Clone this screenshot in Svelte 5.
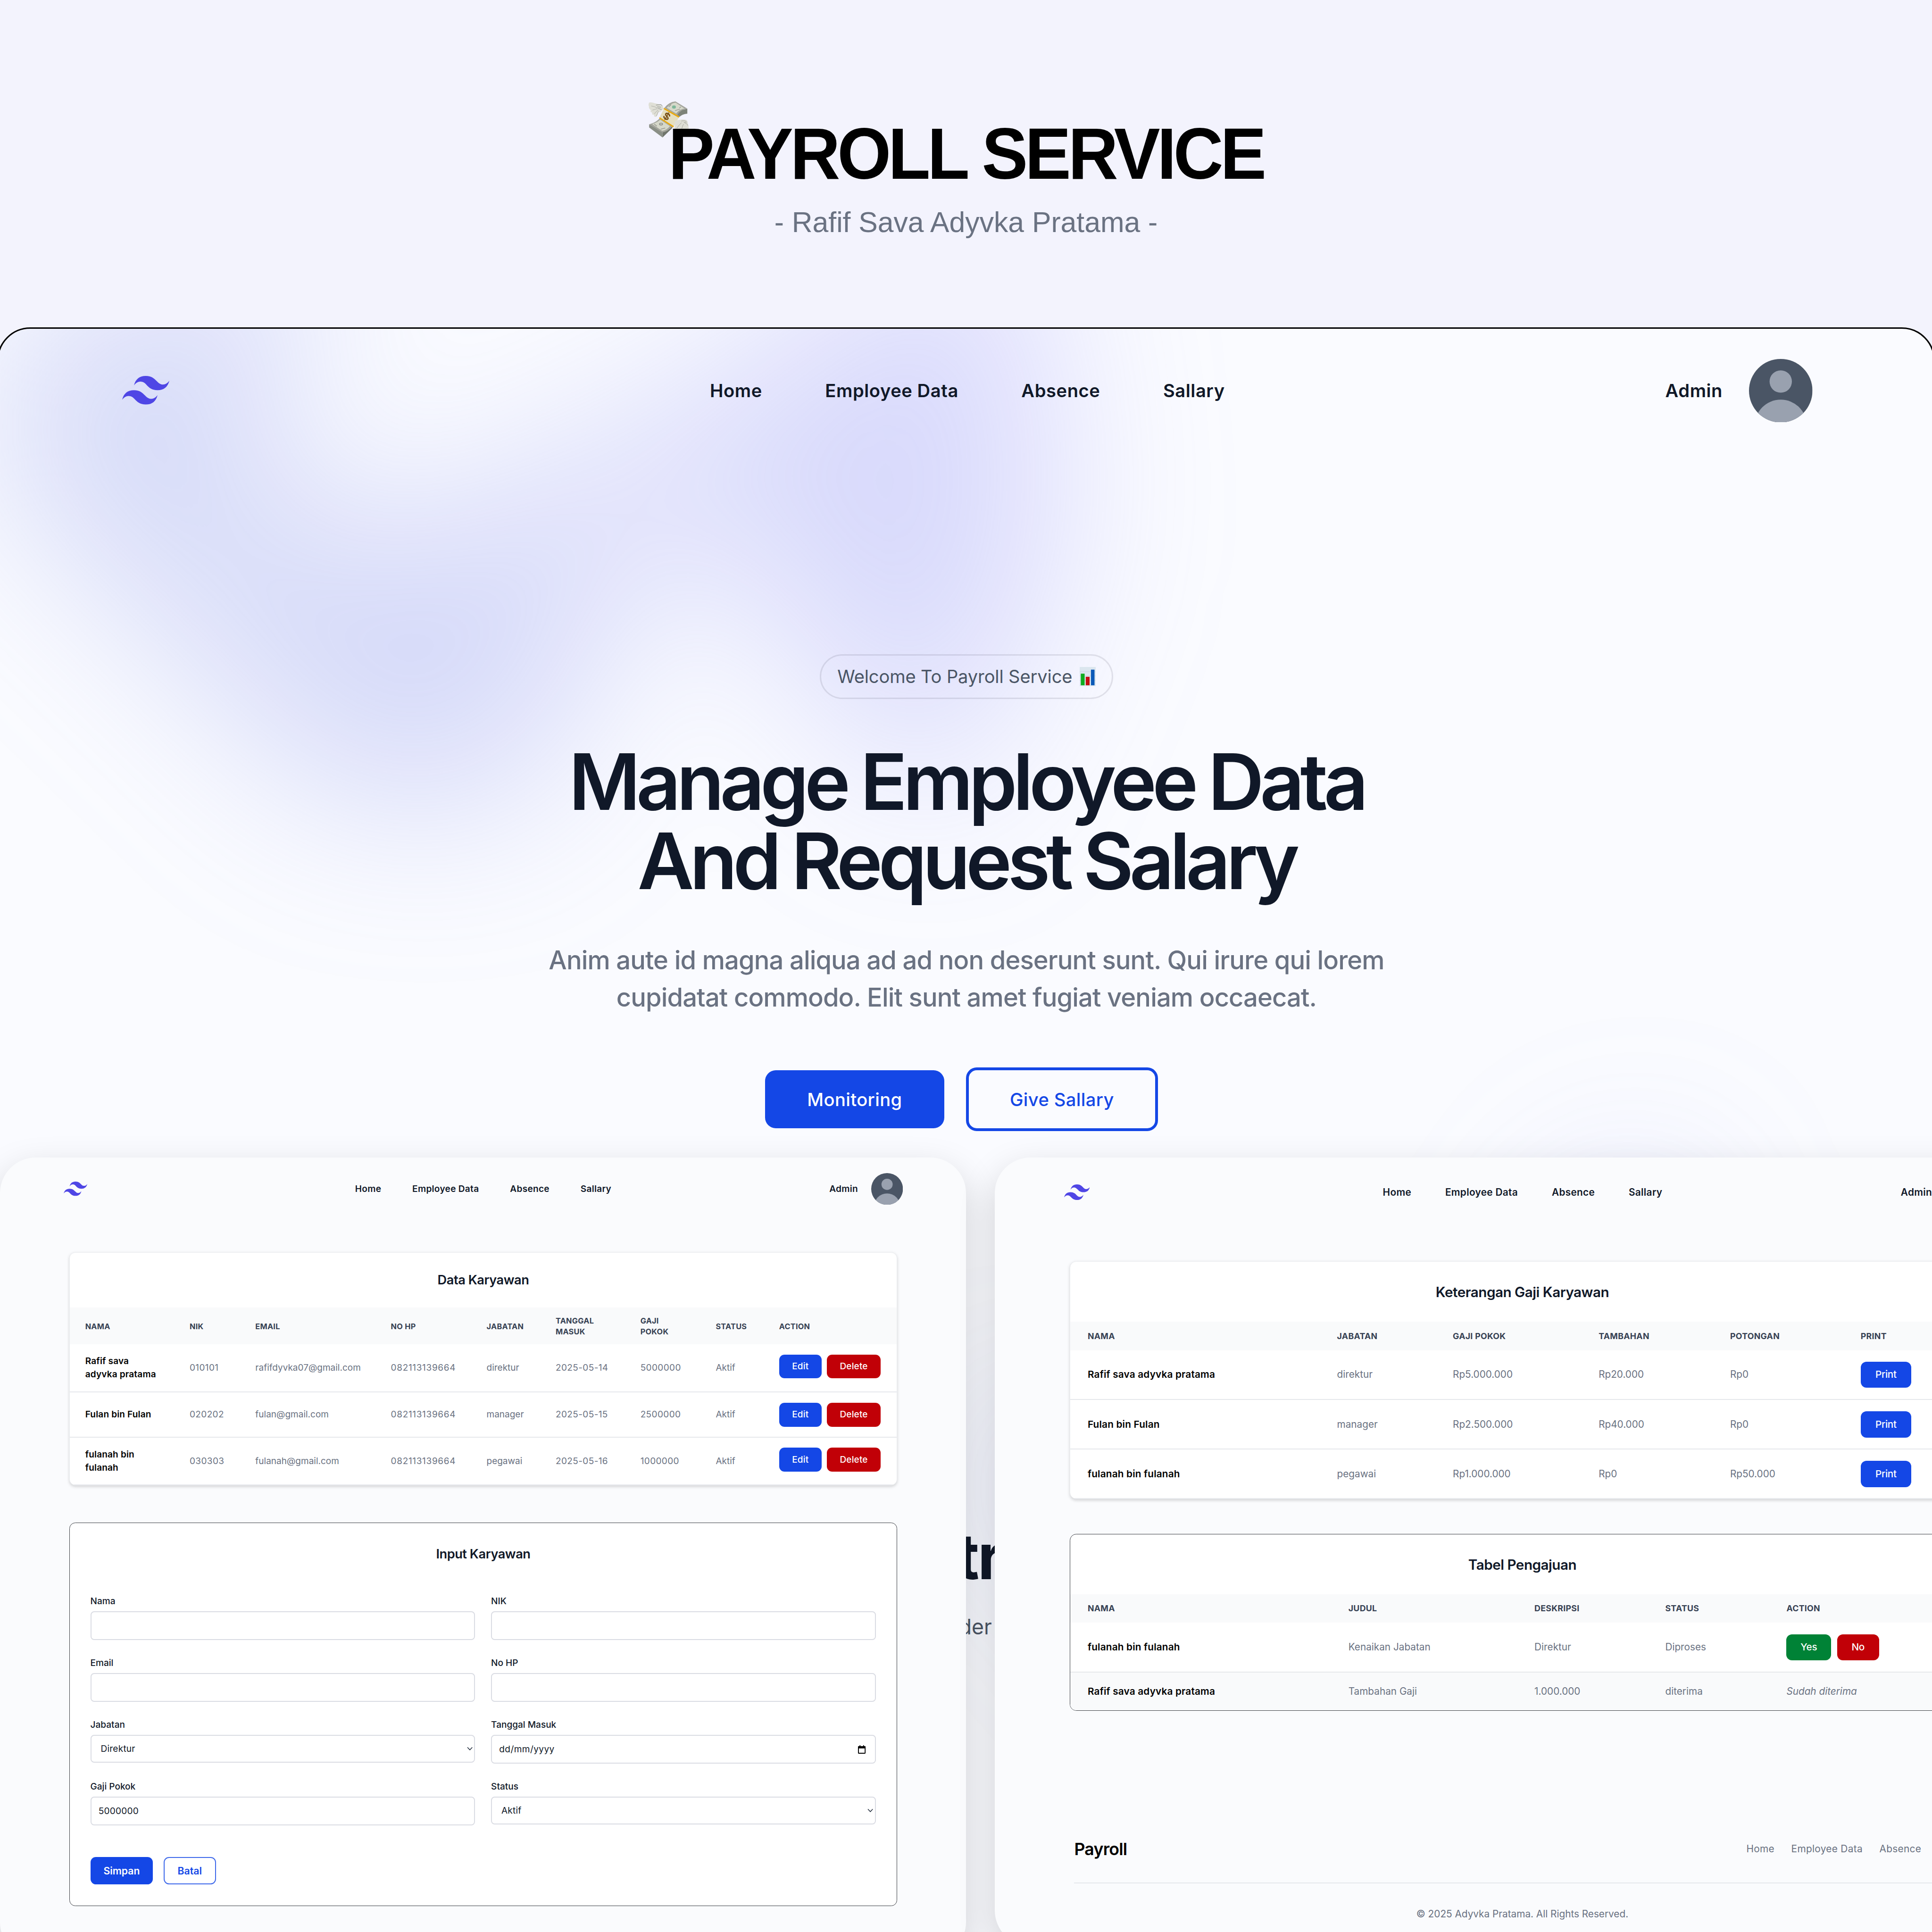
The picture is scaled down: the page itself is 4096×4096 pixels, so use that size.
<script>
  const links = ['Home', 'Employee Data', 'Absence', 'Sallary'];

  const employees = [
    { name: ['Rafif sava', 'adyvka pratama'], nik: '010101', email: 'rafifdyvka07@gmail.com', phone: '082113139664', role: 'direktur', joined: '2025-05-14', salary: '5000000', status: 'Aktif', size: 'tall' },
    { name: ['Fulan bin Fulan'], nik: '020202', email: 'fulan@gmail.com', phone: '082113139664', role: 'manager', joined: '2025-05-15', salary: '2500000', status: 'Aktif', size: 'short' },
    { name: ['fulanah bin', 'fulanah'], nik: '030303', email: 'fulanah@gmail.com', phone: '082113139664', role: 'pegawai', joined: '2025-05-16', salary: '1000000', status: 'Aktif', size: 'tall' }
  ];

  const fields = [
    { label: 'Nama', kind: 'text', value: '' },
    { label: 'NIK', kind: 'text', value: '' },
    { label: 'Email', kind: 'text', value: '' },
    { label: 'No HP', kind: 'text', value: '' },
    { label: 'Jabatan', kind: 'select', value: 'Direktur' },
    { label: 'Tanggal Masuk', kind: 'date', value: 'dd/mm/yyyy' },
    { label: 'Gaji Pokok', kind: 'text', value: '5000000' },
    { label: 'Status', kind: 'select', value: 'Aktif' }
  ];

  const salaries = [
    { name: 'Rafif sava adyvka pratama', role: 'direktur', base: 'Rp5.000.000', bonus: 'Rp20.000', cut: 'Rp0' },
    { name: 'Fulan bin Fulan', role: 'manager', base: 'Rp2.500.000', bonus: 'Rp40.000', cut: 'Rp0' },
    { name: 'fulanah bin fulanah', role: 'pegawai', base: 'Rp1.000.000', bonus: 'Rp0', cut: 'Rp50.000' }
  ];
</script>

{#snippet navbar()}
  <nav class="nav">
    <div class="nav-side">
      <svg class="logo" viewBox="0 0 54 33" preserveAspectRatio="none" fill="#4f46e5">
        <path d="M27 0c-7.2 0-11.7 3.6-13.5 10.8 2.7-3.6 5.85-4.95 9.45-4.05 2.054.513 3.522 2.004 5.147 3.653C30.744 13.09 33.808 16.2 40.5 16.2c7.2 0 11.7-3.6 13.5-10.8-2.7 3.6-5.85 4.95-9.45 4.05-2.054-.513-3.522-2.004-5.147-3.653C36.756 3.11 33.692 0 27 0zM13.5 16.2C6.3 16.2 1.8 19.8 0 27c2.7-3.6 5.85-4.95 9.45-4.05 2.054.514 3.522 2.004 5.147 3.653C17.244 29.29 20.308 32.4 27 32.4c7.2 0 11.7-3.6 13.5-10.8-2.7 3.6-5.85 4.95-9.45 4.05-2.054-.513-3.522-2.004-5.147-3.653C23.256 19.31 20.192 16.2 13.5 16.2z" />
      </svg>
    </div>
    <div class="nav-links">
      {#each links as link}<span>{link}</span>{/each}
    </div>
    <div class="nav-side end">
      <span>Admin</span>
      <svg class="avatar" viewBox="0 0 142 142">
        <defs><clipPath id="round"><circle cx="71" cy="71" r="71" /></clipPath></defs>
        <g clip-path="url(#round)">
          <rect width="142" height="142" fill="#4a5565" />
          <circle cx="71" cy="50.5" r="25" fill="#99a1af" />
          <circle cx="71" cy="149" r="58" fill="#99a1af" />
        </g>
      </svg>
    </div>
  </nav>
{/snippet}

<div class="page">
  <header class="top">
    <h1 class="brand">
      <svg class="money" viewBox="55 50 272 250">
        <path d="M57 62q10-6 40 4q45 6 55 22l3 16l-12 10q-14 14-22 12q-6 20-16 32l-12-2l-4-14l-10 0l-2-14l-10-4l2-12q-16-14-12-24q-6-10 0-26z" fill="#dfdfd6" />
        <path d="M72 84q22 2 42 14M80 112q16-6 34-10M92 138q12-14 26-28M106 152q10-18 14-34" stroke="#a9a9a0" stroke-width="3" fill="none" />
        <path d="M104 78l34-4l8 10M112 90l26 2M118 100l24 8" stroke="#777a75" stroke-width="3" fill="none" />
        <path d="M315 102v34q-34 2-56 24l-18-14l20-30z" fill="#7d8278" />
        <path d="M160 97q30-40 75-44l80 49q-44 4-68 44z" fill="#a3a49c" />
        <path d="M176 96q26-30 60-35l60 40q-36 6-56 34z" fill="#d6d8ca" />
        <ellipse cx="225" cy="91" rx="13" ry="11" fill="#7fb79a" />
        <path d="M190 90l16-16M232 116l34-12M262 96l10-6" stroke="#8b8d86" stroke-width="4" />
        <path d="M58 207v22l90 67v-36z" fill="#8a8f86" />
        <path d="M148 258v38l66-64v-14z" fill="#70756c" />
        <path d="M58 207q48-12 72-42l84 56q-30 36-68 42z" fill="#a3a49c" />
        <path d="M78 206q34-10 54-30l66 44q-24 28-52 32z" fill="#d6d8ca" />
        <ellipse cx="138" cy="206" rx="13" ry="9" fill="#8f918a" />
        <ellipse cx="138" cy="206" rx="6" ry="4" fill="#d6d8ca" />
        <path d="M92 206l18 14M136 240l30-8" stroke="#8b8d86" stroke-width="4" />
        <path d="M160 97l102 57l-42 75l-95-62z" fill="#e5dfc0" />
        <path d="M160 97l102 57l-5 9l-103-59z" fill="#e8a80c" />
        <path d="M129 160l95 60l-4 9l-95-62z" fill="#e8a80c" />
        <g transform="translate(177 153) rotate(30)" fill="none" stroke="#7a5218" stroke-linecap="round">
          <path d="M15-11C10-22-14-22-14-9C-14 4 15-3 15 11C15 23-11 23-16 11" stroke-width="9" />
          <path d="M0-27V27" stroke-width="6" />
        </g>
        <path d="M232 186q40-18 76-8q12 10 10 22q8 22 6 38h-92q-6-10 0-24q-4-14 0-28z" fill="#deded5" />
        <path d="M274 186q20-6 32 2q6 16-14 6q24 10 26 22M276 196q-18 18-32 38M290 206q-8 12-12 30" stroke="#a0a098" stroke-width="3" fill="none" />
      </svg>
      <span class="brand-text">PAYROLL SERVICE</span>
    </h1>
    <p class="author">- Rafif Sava Adyvka Pratama -</p>
  </header>

  <section class="hero">
    <div class="glow first"><div class="shape"></div></div>
    <div class="glow second"><div class="shape"></div></div>
    {@render navbar()}
    <div class="intro">
      <div class="badge">
        <span>Welcome To Payroll Service</span>
        <svg class="chart" viewBox="0 0 36 43">
          <rect width="36" height="43" rx="1" fill="#dbe6ee" />
          <path d="M0 10.500h36M0 20h36M0 30h36" stroke="#c9d5de" stroke-width="1" />
          <rect x="2.500" y="15" width="8.600" height="26" fill="#0eab1e" />
          <rect x="13.600" y="22" width="8.600" height="19" fill="#c40d12" />
          <rect x="25.200" y="6" width="8" height="35" fill="#0b59b8" />
        </svg>
      </div>
      <h2 class="headline">Manage Employee Data<br />And Request Salary</h2>
      <p class="lead">Anim aute id magna aliqua ad ad non deserunt sunt. Qui irure qui lorem<br />cupidatat commodo. Elit sunt amet fugiat veniam occaecat.</p>
      <div class="cta">
        <span class="cta-main">Monitoring</span>
        <span class="cta-alt">Give Sallary</span>
      </div>
    </div>
  </section>

  <div class="behind">
    <span class="behind-title">tr</span>
    <span class="behind-text">der</span>
  </div>

  <section class="window employees">
    {@render navbar()}
    <div class="card soft">
      <h3>Data Karyawan</h3>
      <div class="row head">
        <span>NAMA</span><span>NIK</span><span>EMAIL</span><span>NO HP</span><span>JABATAN</span>
        <span>TANGGAL<br />MASUK</span><span>GAJI<br />POKOK</span><span>STATUS</span><span>ACTION</span>
      </div>
      {#each employees as e}
        <div class="row {e.size}">
          <span class="name">{#each e.name as part}<span class="line">{part}</span>{/each}</span>
          <span class="num">{e.nik}</span>
          <span>{e.email}</span>
          <span class="num wide">{e.phone}</span>
          <span>{e.role}</span>
          <span class="num">{e.joined}</span>
          <span class="num">{e.salary}</span>
          <span>{e.status}</span>
          <span class="actions"><b class="btn blue edit">Edit</b><b class="btn red delete">Delete</b></span>
        </div>
      {/each}
    </div>

    <div class="card outlined form">
      <h3>Input Karyawan</h3>
      <div class="fields">
        {#each fields as f}
          <div class="field">
            <span class="label">{f.label}</span>
            <div class="input {f.kind}">
              <span>{f.value}</span>
              {#if f.kind === 'select'}
                <svg class="chevron" viewBox="0 0 12 8"><path d="M1 1.200l5 5.300l5-5.300" fill="none" stroke="#1e2939" stroke-width="1.400" /></svg>
              {:else if f.kind === 'date'}
                <svg class="calendar" viewBox="0 0 17 19"><path d="M3.500 0h2v2h6V0h2v2H15.500a1.500 1.500 0 0 1 1.500 1.500v14a1.500 1.500 0 0 1-1.500 1.500h-14A1.500 1.500 0 0 1 0 17.500v-14A1.500 1.500 0 0 1 1.500 2H3.500zM2 7v10h13V7z" fill="#000" fill-rule="evenodd" /></svg>
              {/if}
            </div>
          </div>
        {/each}
      </div>
      <div class="form-actions">
        <span class="save">Simpan</span>
        <span class="cancel">Batal</span>
      </div>
    </div>
  </section>

  <section class="window payroll">
    {@render navbar()}
    <div class="card soft">
      <h3>Keterangan Gaji Karyawan</h3>
      <div class="row head salary">
        <span>NAMA</span><span>JABATAN</span><span>GAJI POKOK</span><span>TAMBAHAN</span><span>POTONGAN</span><span>PRINT</span>
      </div>
      {#each salaries as s}
        <div class="row salary">
          <span class="name">{s.name}</span>
          <span>{s.role}</span>
          <span>{s.base}</span>
          <span>{s.bonus}</span>
          <span>{s.cut}</span>
          <span class="actions"><b class="btn blue print">Print</b></span>
        </div>
      {/each}
    </div>

    <div class="card outlined">
      <h3>Tabel Pengajuan</h3>
      <div class="row head request">
        <span>NAMA</span><span>JUDUL</span><span>DESKRIPSI</span><span>STATUS</span><span>ACTION</span>
      </div>
      <div class="row request">
        <span class="name">fulanah bin fulanah</span>
        <span>Kenaikan Jabatan</span>
        <span>Direktur</span>
        <span>Diproses</span>
        <span class="actions"><b class="btn green yes">Yes</b><b class="btn red no">No</b></span>
      </div>
      <div class="row request done">
        <span class="name">Rafif sava adyvka pratama</span>
        <span>Tambahan Gaji</span>
        <span>1.000.000</span>
        <span>diterima</span>
        <em>Sudah diterima</em>
      </div>
    </div>

    <footer class="footer">
      <div class="footer-row">
        <strong>Payroll</strong>
        <div class="footer-links">
          {#each links as link}<span>{link}</span>{/each}
        </div>
      </div>
      <p>© 2025 Adyvka Pratama. All Rights Reserved.</p>
    </footer>
  </section>
</div>

<style>
  :global(body) { background: #f3f3fd; overflow: hidden; }

  .page {
    position: relative;
    width: 4320px;
    height: 4320px;
    zoom: 0.948148;
    overflow: hidden;
    background: #f3f3fd;
    font-family: Inter, "Liberation Sans", sans-serif;
    color: #101828;
    white-space: nowrap;
  }
  .page * { box-sizing: border-box; }
  h1, h2, h3, p { margin: 0; }
  svg { display: block; flex: none; }

  /* title banner */
  .top {
    height: 732px;
    padding-top: 254px;
    display: flex;
    flex-direction: column;
    align-items: center;
    font-family: "Liberation Sans", Arial, sans-serif;
  }
  .brand { position: relative; font-size: 154.600px; line-height: 180px; height: 180px; letter-spacing: -0.0423em; color: #000; }
  .brand-text { position: relative; display: inline-block; transform: scaleY(1.047); }
  .money { position: absolute; left: -44px; top: -28px; width: 91px; height: 83px; }
  .author { margin-top: 24px; font-size: 64px; line-height: 80px; letter-spacing: 0; color: #6a7282; }

  /* hero */
  .hero {
    position: relative;
    width: 4332px;
    height: 3700px;
    margin-left: -6px;
    border: 4px solid #000;
    border-radius: 74px;
    background: #fafbff;
    overflow: hidden;
    --u: 2.958px;
    --gap: 47.6;
  }
  .glow {
    position: absolute;
    left: 2px;
    width: 4320px;
    height: 2006px;
    overflow: hidden;
    filter: blur(189px);
  }
  .glow.first { top: -947px; }
  .glow.second { top: 1130px; }
  .shape {
    position: absolute;
    top: 0;
    width: 3417px;
    height: 2006px;
    opacity: 0.3;
    background: linear-gradient(to top right, #718ada, #908af9);
    clip-path: polygon(74.1% 44.1%, 100% 61.6%, 97.5% 26.9%, 85.5% 0.1%, 80.7% 2%, 72.5% 32.5%, 60.2% 62.4%, 52.4% 68.1%, 47.5% 58.3%, 45.2% 34.5%, 27.5% 76.7%, 0.1% 64.9%, 17.9% 100%, 27.6% 76.8%, 76.1% 97.7%, 74.1% 44.1%);
  }
  .first .shape { left: -968px; transform: rotate(30deg); }
  .second .shape { left: 2156px; }

  .nav {
    position: relative;
    display: flex;
    align-items: center;
    font-size: calc(var(--u) * 13.6);
    font-weight: 600;
    letter-spacing: 0.015em;
    line-height: calc(var(--u) * 24);
  }
  .nav span { padding-top: calc(var(--u) * 0.8); }
  .nav-side { flex: 1 1 0; display: flex; align-items: center; }
  .nav-side.end { justify-content: flex-end; gap: calc(var(--u) * 20); }
  .nav-links { display: flex; gap: calc(var(--u) * var(--gap)); }
  .logo { width: calc(var(--u) * 35.7); height: calc(var(--u) * 22); }
  .avatar { width: calc(var(--u) * 48); height: calc(var(--u) * 48); }
  .hero .nav { padding: 67px 270px 0 276px; }

  .intro { position: relative; display: flex; flex-direction: column; align-items: center; text-align: center; padding-left: 2px; }
  .badge {
    margin-top: 518.500px;
    width: 656px;
    height: 100px;
    display: flex;
    align-items: center;
    justify-content: center;
    gap: 16px;
    border: 3.200px solid rgba(16, 24, 40, 0.1);
    border-radius: 50px;
    font-size: 40.200px;
    letter-spacing: -0.0037em;
    color: #4a5565;
  }
  .chart { width: 36px; height: 43px; }
  .headline { margin-top: 96px; font-size: 174px; font-weight: 600; line-height: 177.300px; letter-spacing: -0.0555em; word-spacing: -3px; }
  .lead { margin-top: 92px; font-size: 57.300px; font-weight: 500; line-height: 82.800px; letter-spacing: -0.0167em; color: #6a7282; }
  .cta {
    margin-top: 116.500px;
    padding-right: 22px;
    display: flex;
    align-items: center;
    gap: 48px;
    font-size: 40.200px;
    font-weight: 500;
    letter-spacing: 0.01em;
  }
  .cta-main, .cta-alt { display: flex; align-items: center; justify-content: center; border-radius: 24px; }
  .cta-main { width: 401px; height: 130px; background: #1447e6; color: #fff; }
  .cta-alt { width: 430px; height: 142px; border: 6.400px solid #1447e6; color: #1447e6; }

  /* copy peeking out between the two windows */
  .behind {
    position: absolute;
    left: 2133px;
    top: 3400px;
    width: 140px;
    display: flex;
    flex-direction: column;
  }
  .behind-title { font-size: 141px; font-weight: 700; line-height: 160px; letter-spacing: -0.025em; padding-left: 5px; }
  .behind-text { margin-top: 50px; font-size: 47px; line-height: 56px; color: #4a5565; padding-left: 11px; }

  /* windows */
  .window {
    position: absolute;
    top: 2588px;
    border-radius: 80px;
    background: #fafbfd;
    box-shadow: 0 30px 80px rgba(0, 0, 0, 0.17);
    --gap: 46.9;
  }
  .employees { left: 0; width: 2160px; height: 1790px; padding: 0 154px 0 155px; --u: 1.48px; }
  .payroll { left: 2224px; width: 2360px; height: 1764px; padding: 0 168px; --u: 1.615px; }
  .employees .nav { margin: 0 -13px; padding-top: 35px; }
  .payroll .nav { margin: 0 -14px 0 -13px; padding-top: 39.600px; }

  .card { background: #fff; border-radius: calc(var(--u) * 9); overflow: hidden; }
  .card.soft { border: 1.200px solid #eceef1; box-shadow: 0 3px 7px rgba(0, 0, 0, 0.16); }
  .card.outlined { border: 1.500px solid #3d4046; }
  .employees .card.soft { margin-top: 106.500px; height: 521px; }
  .employees .card.outlined { margin-top: 83px; height: 858px; }
  .payroll .card.soft { margin-top: 115px; height: 532px; }
  .payroll .card.outlined { margin-top: 77.300px; height: 396px; }

  h3 {
    height: 122.500px;
    line-height: 123px;
    text-align: center;
    font-size: calc(var(--u) * 19.4);
    font-weight: 600;
    letter-spacing: -0.0175em;
  }
  .payroll h3 { height: 134.500px; line-height: 135.500px; }

  .row {
    display: grid;
    align-items: center;
    padding-left: 34.500px;
    padding-top: 1px;
    font-size: calc(var(--u) * 13.55);
    line-height: calc(var(--u) * 20);
    color: #6a7282;
    border-bottom: 2.200px solid #e6e8ec;
    grid-template-columns: 233.400px 147px 303px 214px 154.500px 189.500px 168.500px 141.700px 1fr;
  }
  .row.tall { height: 107px; }
  .row.short { height: 101.500px; }
  .row.head {
    height: 82px;
    border-bottom: 0;
    background: #f9fafb;
    color: #364153;
    font-size: calc(var(--u) * 11.62);
    font-weight: 700;
    line-height: calc(var(--u) * 16);
    letter-spacing: 0.016em;
  }
  .row.salary { height: 111px; padding-left: 39px; grid-template-columns: 557.500px 259px 326px 294px 292px 1fr; }
  .row.request { height: 111px; padding-left: 39px; grid-template-columns: 583px 416px 292.500px 271px 1fr; }
  .payroll .row.head { height: 63.500px; }
  .payroll .row.done { height: 86px; background: #f9fafb; border-bottom: 0; }

  .name { color: #000; font-weight: 600; letter-spacing: 0.009em; }
  .line { display: block; }
  .num { letter-spacing: 0.02em; }
  .num.wide { letter-spacing: 0.035em; }

  .actions { display: flex; font-weight: 500; color: #fff; }
  .btn { display: flex; align-items: center; justify-content: center; font-weight: 500; border-radius: calc(var(--u) * 8); letter-spacing: 0.008em; }
  .employees .actions { gap: 11.500px; }
  .employees .tall .actions { margin-bottom: 7px; }
  .employees .btn { height: 53.700px; }
  .payroll .actions { gap: 13.500px; }
  .payroll .btn { height: 58.500px; letter-spacing: -0.015em; }
  .edit { width: 95px; }
  .delete { width: 121px; }
  .print { width: 113px; }
  .yes { width: 100px; }
  .no { width: 93.500px; }
  .blue { background: #1447e6; }
  .red { background: #c10007; }
  .green { background: #008236; }

  /* form */
  .form { padding: 0 46px; }
  .form h3 { height: 140px; line-height: 140px; }
  .fields { margin-top: 19.500px; display: grid; grid-template-columns: 860px 860px; column-gap: 36px; grid-auto-rows: 138.200px; }
  .label { display: block; font-size: 20.100px; font-weight: 500; line-height: 31px; }
  .input {
    margin-top: 6.500px;
    height: 64.500px;
    padding: 1px 16px 0;
    display: flex;
    align-items: center;
    justify-content: space-between;
    border: 2.200px solid #dadce3;
    border-radius: 8px;
    font-size: 20.100px;
    letter-spacing: 0.012em;
  }
  .input.select { height: 62px; padding: 0 3px 0 21px; }
  .input.date { padding-right: 20px; letter-spacing: 0.022em; }
  .chevron { width: 13px; height: 9px; }
  .calendar { width: 17px; height: 19px; }
  .form-actions { margin-top: 35px; display: flex; gap: 24px; font-size: 22.400px; font-weight: 600; }
  .save, .cancel { height: 61px; display: flex; align-items: center; justify-content: center; border-radius: 12px; }
  .save { width: 140px; background: #1447e6; color: #fff; }
  .cancel { width: 116.500px; border: 2.200px solid #3e69ea; color: #1447e6; }

  /* footer */
  .footer { margin: 279.500px 10px 0; color: #6a7282; font-size: 22px; }
  .footer-row { height: 107px; padding-bottom: 46px; display: flex; align-items: center; justify-content: space-between; border-bottom: 2.200px solid #e5e7eb; }
  .footer strong { color: #000; font-size: 37.600px; font-weight: 600; letter-spacing: -0.0216em; }
  .footer-links { display: flex; gap: 37.500px; letter-spacing: 0.014em; }
  .footer p { margin-top: 52px; line-height: 32px; text-align: center; letter-spacing: -0.0022em; }
</style>
